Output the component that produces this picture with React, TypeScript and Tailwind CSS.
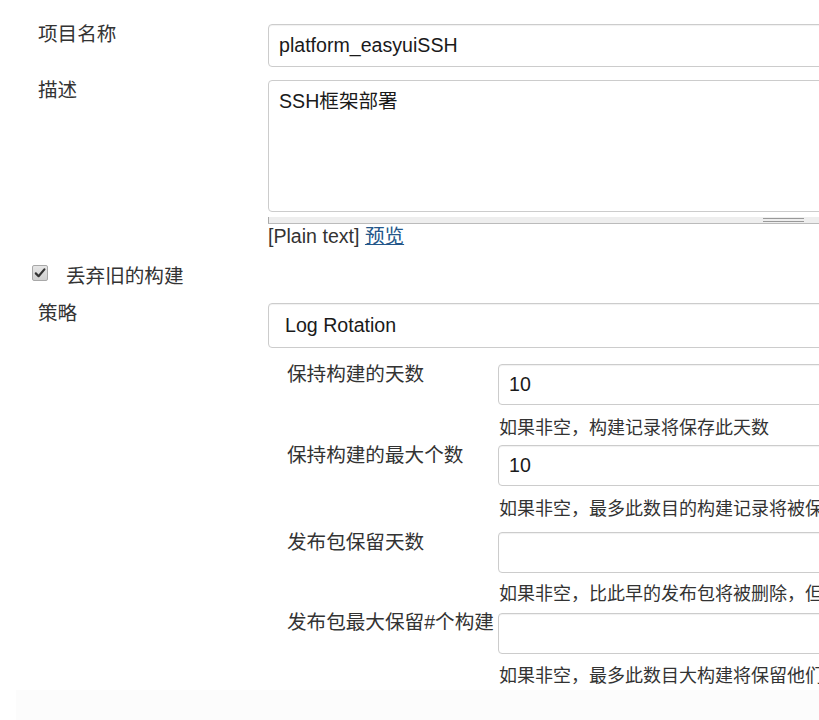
import React from "react";

const font = { fontFamily: '"Liberation Sans", "Noto Sans CJK SC", sans-serif' };

// 嵌套的保留策略字段
const nestedFields = [
  { label: "保持构建的天数", value: "10", hint: "如果非空，构建记录将保存此天数", rowMt: "mt-[13px]", inputMt: "mt-[3px]", hintMt: "mt-[11px]" },
  { label: "保持构建的最大个数", value: "10", hint: "如果非空，最多此数目的构建记录将被保留", rowMt: "mt-[2px]", inputMt: "mt-[3px]", hintMt: "mt-[11px]" },
  { label: "发布包保留天数", value: "", hint: "如果非空，比此早的发布包将被删除，但构建的日志、操作历史、报告等将被保留", rowMt: "mt-[8px]", inputMt: "mt-[3px]", hintMt: "mt-[9px]" },
  { label: "发布包最大保留#个构建", value: "", hint: "如果非空，最多此数目大构建将保留他们的发布包", rowMt: "mt-[3px]", inputMt: "mt-[4px]", hintMt: "mt-[10px]" },
];

const inputBox =
  "shrink-0 border border-[#cccccc] rounded-[4px] bg-white shadow-[inset_0_1px_1px_rgba(0,0,0,0.06)] text-[#1a1a1a] flex items-center";

export default function App() {
  return (
    <div className="w-full h-[720px] overflow-hidden bg-white text-[#333333] text-[19.6px]" style={font}>
      <div className="pt-[21px]">
        {/* 项目名称 */}
        <div className="flex items-start">
          <div className="w-[268px] shrink-0 pl-[38px] leading-[27px] whitespace-nowrap">项目名称</div>
          <div className={`${inputBox} mt-[3px] h-[43px] w-[700px] pl-[10px]`}>platform_easyuiSSH</div>
        </div>

        {/* 描述 */}
        <div className="flex items-start mt-[10px]">
          <div className="w-[268px] shrink-0 pl-[38px] leading-[27px] whitespace-nowrap">描述</div>
          <div className="mt-[3px] w-[700px] shrink-0">
            <div className="h-[132px] border border-[#cccccc] rounded-[4px] bg-white px-[10px] pt-[7px] leading-[27px] text-[#1a1a1a]">
              SSH框架部署
            </div>
            <div className="mt-[5px] h-[7px] bg-[#eeeeee] border-b border-[#bbbbbb] border-l border-l-[#aaaaaa] flex justify-start">
              <div className="ml-[494px] mt-[1px] w-[41px] h-[4px] border-t border-b border-[#999999]" />
            </div>
            <div className="leading-[24px] whitespace-nowrap">
              [Plain text]{" "}
              <a href="#" className="text-[#24578a] underline">
                预览
              </a>
            </div>
          </div>
        </div>

        {/* 丢弃旧的构建 */}
        <div className="flex items-start mt-[15px] pl-[32px]">
          <div className="shrink-0 mt-[2px] w-[16px] h-[16px] rounded-[2px] border border-[#a8a8a8] bg-gradient-to-b from-[#e6e6e6] to-[#cfcfcf] flex items-center justify-center">
            <svg width="12" height="12" viewBox="0 0 12 12">
              <path d="M1.8 6.4 L4.6 9.2 L10.4 2.4" fill="none" stroke="#333333" strokeWidth="2.2" strokeLinecap="round" strokeLinejoin="round" />
            </svg>
          </div>
          <div className="ml-[18px] leading-[27px] whitespace-nowrap">丢弃旧的构建</div>
        </div>

        {/* 策略 */}
        <div className="flex items-start mt-[10px]">
          <div className="w-[268px] shrink-0 pl-[38px] leading-[27px] whitespace-nowrap">策略</div>
          <div className={`${inputBox} mt-[3px] h-[45px] w-[700px] pl-[16px]`}>Log Rotation</div>
        </div>

        {/* 策略下的字段 */}
        <div className="pl-[287px]">
          {nestedFields.map((f) => (
            <div key={f.label} className={f.rowMt}>
              <div className="flex items-start">
                <div className="w-[211px] shrink-0 leading-[27px] whitespace-nowrap">{f.label}</div>
                <div className={`${inputBox} ${f.inputMt} w-[480px] h-[41px] pl-[10px]`}>{f.value}</div>
              </div>
              <div className={`${f.hintMt} pl-[212px] text-[18px] leading-[24px] whitespace-nowrap`}>{f.hint}</div>
            </div>
          ))}
        </div>

        <div className="mt-[2px] ml-[16px] h-[40px] bg-[#fcfcfc]" />
      </div>
    </div>
  );
}
